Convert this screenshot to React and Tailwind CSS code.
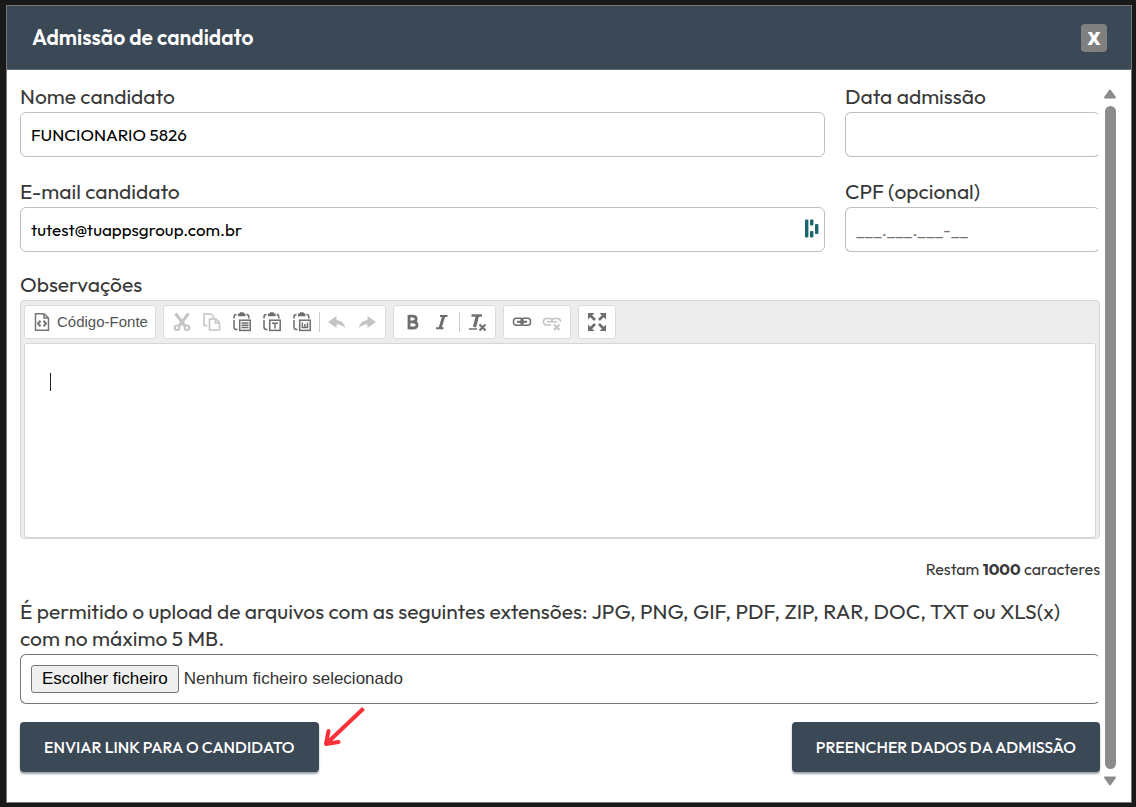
const sans = "font-['Outfit',Lato,sans-serif]";
const label = "text-[21px] leading-[27px] text-[#383838]";
const field = "h-[45px] w-full rounded-md border border-[#bfbfbf] bg-white px-2.5 text-[17px] text-black outline-none";
const group = "flex h-[34px] items-center rounded-[3px] border border-[#dcdcdc] bg-white px-[3px]";
const action = "h-[50px] rounded bg-[#3b4855] px-6 text-base font-medium text-white shadow-[0_2px_2px_#9aa3ad]";

function Tool({ name, muted, children }) {
  return (
    <button
      type="button"
      aria-label={name}
      className={"flex h-8 w-[30px] items-center justify-center " + (muted ? "text-[#c4c4c4]" : "text-[#6e6e6e]")}
    >
      {children}
    </button>
  );
}

function Icon({ children }) {
  return (
    <svg width="20" height="20" viewBox="0 0 20 20" fill="none" stroke="currentColor" strokeWidth="1.5" aria-hidden="true">
      {children}
    </svg>
  );
}

function Clipboard({ children }) {
  return (
    <Icon>
      <path d="M4.5 2.5Q2 2.500 2 5V6.500M2 8V15Q2 17.500 4.500 17.500H5.500M14.500 2.500Q16.800 2.500 16.800 5V6.500" />
      <path d="M6 1.500H7.500L8 .3H11.500L12 1.500H13.500V4.200H6Z" fill="currentColor" stroke="none" />
      <rect x="7.700" y="8.200" width="10.500" height="10.200" fill="white" />
      {children}
    </Icon>
  );
}

export default function App() {
  return (
    <div className={"min-h-screen bg-[#191919] pt-[5px] pr-1 pb-[5px] pl-1.5 " + sans}>
      <div role="dialog" aria-labelledby="title" className="border border-[#777] bg-white">
        <header className="flex h-16 items-center justify-between border-b border-[#64707a] bg-[#3b4855] pr-6 pl-[25px]">
          <h1 id="title" className="text-[21px] font-semibold text-white">Admissão de candidato</h1>
          <button type="button" aria-label="Fechar" className="flex h-7 w-[26px] items-center justify-center rounded bg-[#808080] font-['Open_Sans','Noto_Sans',sans-serif] text-lg leading-none font-extrabold text-white">
            X
          </button>
        </header>

        <div className="flex gap-1 pr-[15px] pl-[13px]">
          <form className="min-w-0 flex-1 pt-[13px] pb-[30px]">
            <div className="grid grid-cols-[805fr_255fr] gap-x-5 gap-y-[21px]">
              <div className="flex flex-col gap-0.5">
                <label htmlFor="nome" className={label}>Nome candidato</label>
                <input id="nome" className={field} defaultValue="FUNCIONARIO 5826" />
              </div>
              <div className="flex flex-col gap-0.5">
                <label htmlFor="data" className={label}>Data admissão</label>
                <input id="data" className={field + " border-r-transparent"} />
              </div>
              <div className="flex flex-col gap-0.5">
                <label htmlFor="email" className={label}>E-mail candidato</label>
                <div className="relative">
                  <input id="email" className={field} defaultValue="tutest@tuappsgroup.com.br" />
                  <svg className="absolute top-3 right-1.5" width="14" height="20" viewBox="0 0 14 20" fill="#1a656e" aria-hidden="true">
                    <rect x="0" y="0.500" width="3.400" height="18" rx="1" />
                    <rect x="5" y="0.500" width="3.400" height="6" rx="1" />
                    <rect x="5" y="12" width="3.400" height="6.500" rx="1" />
                    <rect x="10" y="5" width="3.400" height="10" rx="1" />
                  </svg>
                </div>
              </div>
              <div className="flex flex-col gap-0.5">
                <label htmlFor="cpf" className={label}>CPF (opcional)</label>
                <input id="cpf" className={field + " border-r-transparent placeholder:text-[#757575]"} placeholder="___.___.___-__" />
              </div>
            </div>

            <label htmlFor="obs" className={"mt-[19px] mb-0.5 block " + label}>Observações</label>
            <div className="rounded border border-[#d6d6d6] bg-[#ededed] px-[3px]">
              <div className="flex h-[42px] items-center gap-[7px]">
                <div className={group}>
                  <button type="button" className="flex h-8 items-center gap-[5px] px-1 font-['Liberation_Sans',sans-serif] text-[15px] text-[#545454]">
                    <svg width="20" height="20" viewBox="0 0 18 20" fill="none" stroke="#777" strokeWidth="1.500" aria-hidden="true">
                      <path d="M2.500 1.800H11L15.500 6V18.200H2.500ZM11 1.800V6H15.500" />
                      <path d="M7.500 8.800 5 11.500 7.500 14.200M10.500 8.800 13 11.500 10.500 14.200" strokeWidth="2" />
                    </svg>
                    Código-Fonte
                  </button>
                </div>
                <div className={group}>
                  <Tool name="Cortar" muted>
                    <Icon>
                      <path d="M3.500 1.500 13 14M16.500 1.500 7 14" strokeWidth="3" />
                      <circle cx="5" cy="15.800" r="2.300" strokeWidth="2" /><circle cx="15" cy="15.800" r="2.300" strokeWidth="2" />
                    </Icon>
                  </Tool>
                  <Tool name="Copiar" muted>
                    <Icon>
                      <path d="M5.500 13.500H2V2H9L11.500 4.500V6M7.500 7H14L17.500 10.500V18H7.500ZM13.500 7V11H17.500" />
                    </Icon>
                  </Tool>
                  <Tool name="Colar"><Clipboard><path d="M9.500 11H16.500M9.500 13.300H16.500M9.500 15.600H16.500" /></Clipboard></Tool>
                  <Tool name="Colar como texto"><Clipboard><path d="M10 11.200H16M13 11V16.500" /></Clipboard></Tool>
                  <Tool name="Colar do Word"><Clipboard><path d="M10.300 10.500V15.500H12.900V12M12.900 15.500H15.500V10.500" /></Clipboard></Tool>
                  <span className="mx-0.5 h-5 w-px bg-[#ccc]" />
                  <Tool name="Desfazer" muted>
                    <Icon><path d="M1 10 9.500 4V8Q17 8.500 18 16Q14.500 12 9.500 12.500V16Z" fill="currentColor" stroke="none" /></Icon>
                  </Tool>
                  <Tool name="Refazer" muted>
                    <Icon><path d="M19 10 10.500 4V8Q3 8.500 2 16Q5.500 12 10.500 12.500V16Z" fill="currentColor" stroke="none" /></Icon>
                  </Tool>
                </div>
                <div className={group}>
                  <Tool name="Negrito">
                    <Icon><path d="M7 4.200H10.500Q14.200 4.200 14.200 7.100 14.200 9.900 10.500 9.900 15 9.900 15 12.900 15 16 10.500 16H7M7 3V17.200M7 9.900H11" strokeWidth="2.800" /></Icon>
                  </Tool>
                  <Tool name="Itálico">
                    <Icon><path d="M8 4H15.500M4 16.300H11.500" strokeWidth="2" /><path d="M11.800 4 8 16.300" strokeWidth="3" /></Icon>
                  </Tool>
                  <span className="mx-0.5 h-5 w-px bg-[#ccc]" />
                  <Tool name="Remover formatação">
                    <Icon><path d="M4.500 3.500H15" strokeWidth="2.400" /><path d="M10.500 3.500 7.500 15" strokeWidth="3.200" /><path d="M2 17H10" /><path d="M12.500 12.500 18.500 18.500M18.500 12.500 12.500 18.500" strokeWidth="2" /></Icon>
                  </Tool>
                </div>
                <div className={group}>
                  <Tool name="Inserir link">
                    <Icon><rect x="1.500" y="6.300" width="9.500" height="7" rx="3" /><rect x="9" y="6.300" width="9.500" height="7" rx="3" /><path d="M5 9.800H15" strokeWidth="2" /></Icon>
                  </Tool>
                  <Tool name="Remover link" muted>
                    <Icon><path d="M9 13H4.500Q1.500 13 1.500 9.700T4.500 6.500H8Q10 6.500 10 9M10 9Q10 6.500 12 6.500H15.500Q18.500 6.500 18.500 10M5 9.800H15" /><path d="M12 12.500 17.500 18M17.500 12.500 12 18" strokeWidth="2" /></Icon>
                  </Tool>
                </div>
                <div className={group}>
                  <Tool name="Maximizar">
                    <Icon>
                      <path d="M1 1H7.500L1 7.500ZM19 1V7.500L12.500 1ZM1 19V12.500L7.500 19ZM19 19H12.500L19 12.500Z" fill="currentColor" stroke="none" />
                      <path d="M3 3 8 8M17 3 12 8M3 17 8 12M17 17 12 12" strokeWidth="2.600" />
                    </Icon>
                  </Tool>
                </div>
              </div>
              <div className="relative">
                <textarea
                  id="obs"
                  className="block h-[195px] w-full resize-none rounded-[3px] border border-[#d6d6d6] bg-white px-[25px] py-7 font-['Liberation_Sans',sans-serif] text-base text-[#333] caret-transparent outline-none"
                />
                <span aria-hidden="true" className="absolute top-[30px] left-[26px] h-[18px] w-px bg-[#222]" />
              </div>
            </div>

            <p className="mt-5 text-right text-base leading-5 text-[#383838]">
              Restam <b>1000</b> caracteres
            </p>
            <p className={"mt-[19px] " + label}>
              É permitido o upload de arquivos com as seguintes extensões: JPG, PNG, GIF, PDF, ZIP, RAR, DOC, TXT ou XLS(x) com no máximo 5 MB.
            </p>
            <label className="mt-0.5 flex h-[50px] items-center gap-[5px] rounded-md border border-[#767676] border-r-transparent px-2.5 font-['Liberation_Sans',sans-serif] text-[17px] text-[#333]">
              <input type="file" className="sr-only" />
              <span className="flex h-7 items-center rounded-[3px] border border-[#767676] bg-[#efefef] px-2.5 text-black">Escolher ficheiro</span>
              <span>Nenhum ficheiro selecionado</span>
            </label>

            <div className="mt-[18px] flex items-center">
              <button type="button" className={action}>ENVIAR LINK PARA O CANDIDATO</button>
              <svg className="-mt-10 ml-1" width="44" height="42" viewBox="0 0 44 42" fill="none" stroke="#fb3038" strokeWidth="4" aria-hidden="true">
                <path d="M40.500 2.500 3 38" />
                <path d="M5.500 25 3 38 15.500 36" strokeLinejoin="round" strokeLinecap="round" />
              </svg>
              <button type="button" className={"ml-auto " + action}>PREENCHER DADOS DA ADMISSÃO</button>
            </div>
          </form>

          <div aria-hidden="true" className="flex w-3 flex-col items-center gap-[7px] pt-[19px] pb-4">
            <svg width="12" height="10" viewBox="0 0 12 10" fill="#8b8b8b" stroke="#8b8b8b" strokeWidth="2" strokeLinejoin="round"><path d="M6 1.500 11 8.500H1Z" /></svg>
            <div className="w-[11px] flex-1 rounded-full bg-[#8b8b8b]" />
            <svg width="12" height="10" viewBox="0 0 12 10" fill="#8b8b8b" stroke="#8b8b8b" strokeWidth="2" strokeLinejoin="round"><path d="M6 8.500 11 1.500H1Z" /></svg>
          </div>
        </div>
      </div>
    </div>
  );
}
